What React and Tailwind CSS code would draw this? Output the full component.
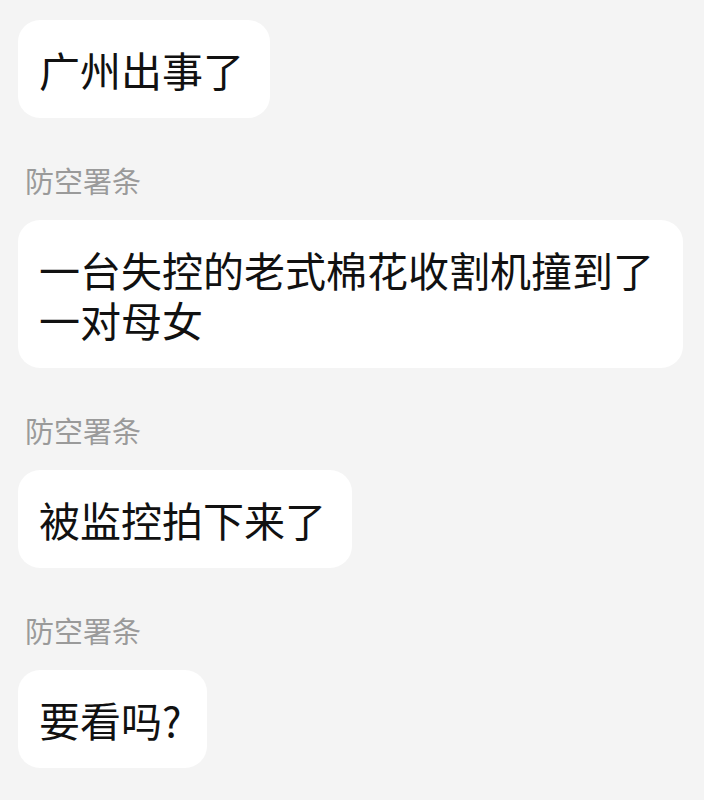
const messages = [
  { sender: null, text: "广州出事了" },
  { sender: "防空署条", text: "一台失控的老式棉花收割机撞到了一对母女" },
  { sender: "防空署条", text: "被监控拍下来了" },
  { sender: "防空署条", text: "要看吗?" }
];

const font = { fontFamily: '"Noto Sans CJK SC", "Noto Sans", sans-serif' };

export default function App() {
  return (
    <div className="min-h-screen bg-[#f4f4f4] pl-[18px] pr-[21px] pt-[20px]" style={font}>
      {messages.map((msg, idx) => (
        <div key={idx} className="flex flex-col items-start">
          {msg.sender && (
            <div className="mt-[42px] mb-[20px] ml-[7px] text-[29px] leading-[40px] text-[#9a9a9a]">
              {msg.sender}
            </div>
          )}
          <div className="max-w-[665px] rounded-[22px] bg-white pl-[21px] pr-[26px] py-[24px] text-[41px] leading-[50px] text-[#111]">
            {msg.text}
          </div>
        </div>
      ))}
    </div>
  );
}
